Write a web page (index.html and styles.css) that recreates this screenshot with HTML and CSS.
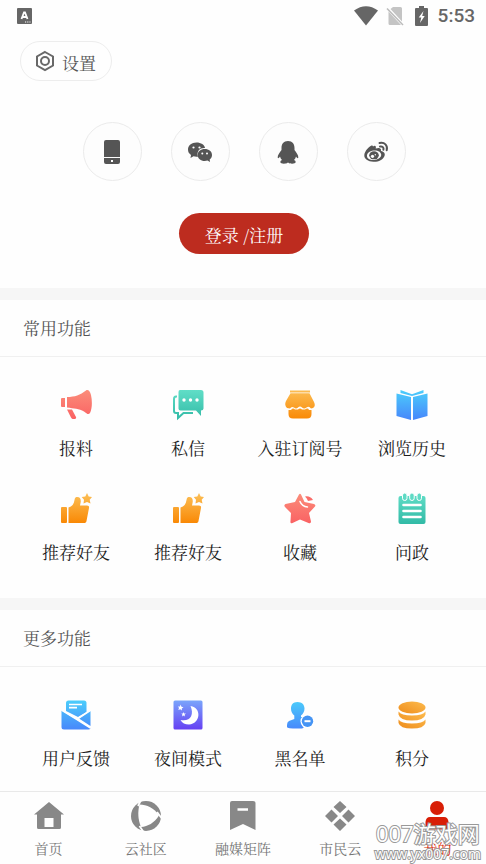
FILE: index.html
```html
<!DOCTYPE html>
<html lang="zh-CN">
<head>
<meta charset="utf-8">
<meta name="viewport" content="width=device-width, initial-scale=1">
<title>我的</title>
<link rel="stylesheet" href="styles.css">
</head>
<body>
<svg class="defs" width="0" height="0" aria-hidden="true">
  <defs>
    <linearGradient id="red" x1="0" y1="0" x2="0" y2="1"><stop offset="0" stop-color="#fb8d7a"/><stop offset="1" stop-color="#fa6263"/></linearGradient>
    <linearGradient id="teal" gradientUnits="userSpaceOnUse" x1="0" y1="0" x2="0" y2="32"><stop offset="0" stop-color="#62dfc8"/><stop offset="1" stop-color="#30b9a5"/></linearGradient>
    <linearGradient id="orange" gradientUnits="userSpaceOnUse" x1="0" y1="0" x2="0" y2="32"><stop offset="0" stop-color="#fcc057"/><stop offset="1" stop-color="#f98500"/></linearGradient>
    <linearGradient id="blue" gradientUnits="userSpaceOnUse" x1="0" y1="0" x2="0" y2="32"><stop offset="0" stop-color="#4bd1fb"/><stop offset="1" stop-color="#4784fb"/></linearGradient>
    <linearGradient id="violet" x1="0" y1="0" x2="0" y2="1"><stop offset="0" stop-color="#7aa5fb"/><stop offset="1" stop-color="#6640f3"/></linearGradient>
    <linearGradient id="coin" x1="1" y1="0" x2="0" y2="1"><stop offset="0" stop-color="#fdbb4e"/><stop offset="1" stop-color="#ee8d1c"/></linearGradient>
    <symbol id="thumb" viewBox="0 0 32 32">
      <g fill="url(#orange)">
        <rect x="1" y="14" width="6" height="16" rx="1"/>
        <path d="M8.500 14.500C12 13.500 14 11 14.500 7C14.800 4.500 16 4 17.300 4C20 4 21 6 20.700 9L20 12.500H27C28.700 12.500 29.300 13.500 29 15L26.500 28C26.200 29.500 25.500 30 24 30H8.500Z"/>
        <path d="M27 0L28.700 3.500L32 4L29.700 6.700L30.500 10.500L27 9L23.500 10.500L24 6.700L21.700 4L25.300 3.500Z"/>
      </g>
    </symbol>
  </defs>
</svg>

<header class="status">
  <svg class="status-app" width="16" height="16" viewBox="0 0 16 16"><rect x="0" y="0" width="15" height="16" rx="1" fill="#666"/><path d="M4.500 11L7 4.500H8L10.500 11M5.500 9H9.500" fill="none" stroke="#fff" stroke-width="1.800"/><path d="M8 14H13.500" stroke="#fff" stroke-width="1" stroke-dasharray="1.200 1"/></svg>
  <svg width="24" height="20" viewBox="0 0 24 20"><path d="M0 4.500Q12-4 24 4.500L12 19.500Z" fill="#666"/></svg>
  <svg class="status-sim" width="18" height="20" viewBox="0 0 18 20"><path d="M4.500 3L7 1H14.500Q16 1 16 2.500V15.500ZM2.500 5.500L15 19H4Q2.500 19 2.500 17.500Z" fill="#c4c4c4"/><path d="M1 2.500L17 19" stroke="#bbb" stroke-width="1.500"/></svg>
  <svg class="status-battery" width="13" height="20" viewBox="0 0 13 20"><path d="M1 2H4V0H9V2H12Q13 2 13 3V19Q13 20 12 20H1Q0 20 0 19V3Q0 2 1 2Z" fill="#666"/><path d="M8.500 5L3.700 11.500H6.300L5 17L9.700 10H7.200Z" fill="#fff"/></svg>
  <time class="clock">5:53</time>
</header>

<main>
  <section class="account">
    <button class="settings" type="button">
      <svg width="20" height="22" viewBox="0 0 20 22" fill="none" stroke="#686868" stroke-width="2"><path d="M10 2L18 6.500V15.500L10 20L2 15.500V6.500Z"/><circle cx="10" cy="11" r="4"/></svg>
      <span>设置</span>
    </button>
    <div class="providers">
      <button type="button" aria-label="手机登录">
        <svg width="26" height="26" viewBox="0 0 26 26"><path d="M5 18V3Q5 1 7 1H19Q21 1 21 3V18ZM5 19H21V23Q21 25 19 25H7Q5 25 5 23Z" fill="#555"/><rect x="12" y="21" width="2" height="2" fill="#fff"/></svg>
      </button>
      <button type="button" aria-label="微信登录">
        <svg width="26" height="26" viewBox="0 0 26 26"><path d="M9.500 3.500C4.500 3.500 1 6.500 1 10.500C1 13 2 14.500 4 16L3.500 19L6.500 17.300Q8.500 18 11 17.700C9 12 13.500 8.500 18 9C17.500 5.800 14 3.500 9.500 3.500Z" fill="#555"/><path d="M17.700 10C13.700 10 10.700 12.500 10.700 16C10.700 19.500 13.700 22 17.700 22L20.500 21.500L23 23L22.700 20.500C24.300 19.300 25 17.800 25 16C25 12.500 22 10 17.700 10Z" fill="#555"/><circle cx="6.500" cy="8.500" r="1.100" fill="#fff"/><circle cx="12.500" cy="8.500" r="1.100" fill="#fff"/><circle cx="15.300" cy="14.500" r="1" fill="#fff"/><circle cx="20" cy="14.500" r="1" fill="#fff"/></svg>
      </button>
      <button type="button" aria-label="QQ登录">
        <svg width="26" height="26" viewBox="0 0 26 26"><path d="M13 2C8.500 2 6.500 5 6.500 9V11C4.500 13.500 2.500 16.500 2.700 18.500C2.900 20 4 19 5 17.500Q5.500 19.500 7 21Q5.300 21.700 5.300 23C5.300 25 11 25.300 13 23.500C15 25.300 20.700 25 20.700 23Q20.700 21.700 19 21Q20.500 19.500 21 17.500C22 19 23.100 20 23.300 18.500C23.500 16.500 21.500 13.500 19.500 11V9C19.500 5 17.500 2 13 2Z" fill="#555"/></svg>
      </button>
      <button type="button" aria-label="微博登录">
        <svg width="26" height="26" viewBox="0 0 26 26"><path fill-rule="evenodd" d="M10 7.500C12 6 13.500 7 12.700 9.500C16 8.500 18.500 8.800 18 12C21 12.800 22.500 14.500 21.500 17C20 21 15.500 23 10.500 22.800C5 22.600 1 20 1.300 16C1.600 12 6.500 7 8.500 6.500Q10 6.200 10 7.500ZM10.500 11.500C6.500 12 3.700 14.500 4 17.200C4.300 20 7.700 21.300 11.500 20.900C15.500 20.500 18.500 18.300 18.200 15.500C17.900 12.700 14.500 11 10.500 11.500Z" fill="#555"/><ellipse cx="11" cy="16.300" rx="4.800" ry="4" fill="#555"/><circle cx="9.500" cy="17.300" r="1.600" fill="#fff"/><circle cx="12.300" cy="15.700" r=".7" fill="#fff"/><path d="M16.500 4C21.500 2.700 25 6.500 23.700 11.200M17 7.500C19.500 7 21 8.700 20.400 10.800" fill="none" stroke="#555" stroke-width="2" stroke-linecap="round"/></svg>
      </button>
    </div>
    <button class="login" type="button">登录 /注册</button>
  </section>

  <section class="panel">
    <h2>常用功能</h2>
    <nav class="features" aria-label="常用功能">
      <a href="#"><svg viewBox="0 0 32 32"><path d="M2 9H5V18H2Q1 18 1 17V10Q1 9 2 9ZM7 8C15 8 20 6 26 1.500C28 .3 30 2 31 6C32.500 13 32 20 30 24C28.500 26 27 25 24 22.500C19 19.500 14 19.500 7 18.500ZM7 20.500H12L16 28Q16.500 29.500 15 30H13Q12 30 11 28.500Z" fill="url(#red)"/></svg><span>报料</span></a>
      <a href="#"><svg viewBox="0 0 32 32"><path d="M8 1H29Q31.500 1 31.500 3.500V19.500Q31.500 21.500 29 21.500V27L24 21.500H8.500Q6.500 21.500 6.500 19.500V3Q6.500 1 8 1Z" fill="url(#teal)"/><path d="M5 7.500H4Q2 7.500 2 10V22Q2 24 4 24H6V29L11.500 24H21" fill="none" stroke="url(#teal)" stroke-width="2"/><g fill="#fff"><circle cx="12" cy="11" r="1.700"/><circle cx="18.500" cy="11" r="1.700"/><circle cx="25" cy="11" r="1.700"/></g></svg><span>私信</span></a>
      <a href="#"><svg viewBox="0 0 32 32"><path d="M6 1.500H26V3.500H6ZM6.500 4.200H25.500L30 13Q32 17 29 19L27 19.500Q25 16.500 22.500 18.500Q20 20.500 18 18.500Q16 16.500 14 18.500Q12 20.500 10 18.500Q7.500 17 6 19.500L3 19Q0 16 2 12ZM4.500 21H7Q9 18.500 11 20.500H14Q16 18.500 18 20.500H21Q24 18.500 25 21H27.500V25Q27.500 29.500 23 29.500H9Q4.500 29.500 4.500 25Z" fill="url(#orange)"/></svg><span>入驻订阅号</span></a>
      <a href="#"><svg viewBox="0 0 32 32"><path d="M.5 4.500L15 8V31L.5 27ZM31.500 4.500L17 8V31L31.500 27ZM4.500 1L16 5.200L27.500 1V4L16 7L4.500 4Z" fill="url(#blue)"/></svg><span>浏览历史</span></a>
      <a href="#"><svg><use href="#thumb"/></svg><span>推荐好友</span></a>
      <a href="#"><svg><use href="#thumb"/></svg><span>推荐好友</span></a>
      <a href="#"><svg viewBox="0 0 32 32"><path d="M15 1.500Q16 0 17 1.500L20.500 9L30 11Q32.500 12 30.500 14L25 20L27 28.500Q27 31 24.500 30L16 26.500L8.500 30Q6 31 6.500 28L7 20L1 14Q-.5 12 1.500 11L11 9Z" fill="url(#red)"/><path d="M21 3.500Q26 2.500 29 7L24 8Q23 5 21 3.500Z" fill="#fa6c68"/><path d="M16 8.500Q18 13.500 23.500 14" fill="none" stroke="#fff" stroke-width="1.500" stroke-linecap="round"/></svg><span>收藏</span></a>
      <a href="#"><svg viewBox="0 0 32 32"><rect x="2.500" y="3" width="27" height="28" rx="2" fill="url(#teal)"/><g fill="#5edac4" stroke="#fff"><rect x="6.500" y="0" width="4.500" height="7.500" rx="2.200"/><rect x="13.700" y="0" width="4.500" height="7.500" rx="2.200"/><rect x="21" y="0" width="4.500" height="7.500" rx="2.200"/></g><path d="M7.500 12H24.500M7.500 18H24.500M7.500 24H24.500" stroke="#fff" stroke-width="2.600" stroke-linecap="round"/></svg><span>问政</span></a>
    </nav>
  </section>

  <section class="panel">
    <h2>更多功能</h2>
    <nav class="features" aria-label="更多功能">
      <a href="#"><svg viewBox="0 0 32 32"><path d="M6 12V4Q6 1.500 8.500 1.500H24Q26.500 1.500 26.500 4V13L18 18Z" fill="url(#blue)"/><path d="M1.500 11.500L30.500 29Q30 30.500 28.500 30.500H4Q1.500 30.500 1.500 28ZM30.500 11.500V27L19 19.500Z" fill="url(#blue)"/><path d="M1.500 11L17 20.700L30.500 29M18 19.500L31 11" fill="none" stroke="#fff" stroke-width="1.500"/><path d="M9 5.500H22M9 8.700H17" stroke="#fff" stroke-width="1.700"/></svg><span>用户反馈</span></a>
      <a href="#"><svg viewBox="0 0 32 32"><rect x="1.500" y="1.500" width="29" height="29" rx="1.500" fill="url(#violet)"/><path d="M18.500 7C30 8.500 28.500 25 17 25.500Q11 25.500 8.500 21C18 23 22.500 16 18.500 7Z" fill="#fff"/><path d="M8.500 5.500L9.500 7.700L11.500 8.300L9.800 9.500L9.900 11.500L8.300 10.300L6.300 11L7 9L6 7.500H8ZM11.500 13L12.200 14.500H14L12.500 15.700L13 17.500L11.500 16.500L10 17.500L10.500 15.700L9.300 14.500H11Z" fill="#fff"/></svg><span>夜间模式</span></a>
      <a href="#"><svg viewBox="0 0 32 32"><path d="M13.500 3C9 3 7 5.800 7 9.500C7 12.500 8.300 15 10.300 16.500V20L5 22Q3 23 3 26V28Q3 29.500 13.500 29.500H18Q21 29 18.500 26Q16 22 19 18L17 18V16.500C19 15 20.500 12.500 20.500 9.500C20.500 5.800 18 3 13.500 3Z" fill="url(#blue)"/><circle cx="23.500" cy="22.200" r="7" fill="#fff"/><circle cx="23.500" cy="22.200" r="5.700" fill="#4594f4"/><path d="M20.500 22.200H26.500" stroke="#fff" stroke-width="2"/></svg><span>黑名单</span></a>
      <a href="#"><svg viewBox="0 0 32 32"><g fill="url(#coin)"><ellipse cx="16" cy="8.500" rx="13.500" ry="6"/><path d="M2.500 12.500Q5 16.500 16 16.500T29.500 12.500V15.500Q28 21.500 16 21.500T2.500 15.500ZM2.500 20.500Q5 24.500 16 24.500T29.500 20.500V24Q28 29.500 16 29.500T2.500 24Z"/></g></svg><span>积分</span></a>
    </nav>
  </section>
</main>

<nav class="tabs" aria-label="主导航">
  <a href="#"><svg viewBox="0 0 32 32"><path fill-rule="evenodd" d="M16 2L31 14.500H28V27.500Q28 29 26.500 29H5.500Q4 29 4 27.500V14.500H1ZM11.500 18V27H20.500V18Z"/></svg><span>首页</span></a>
  <a href="#"><svg viewBox="0 0 32 32"><circle cx="16" cy="16" r="15"/><path d="M9.500 4.500C17 4.500 24 8 29 15.500C24 23 18 26.500 11 27C8 20 7.500 12 9.500 4.500Z" fill="#fff"/><path d="M11 0L8 6M27 12L31.500 18M13.500 32L9.500 26" stroke="#fff" stroke-width="1.800"/></svg><span>云社区</span></a>
  <a href="#"><svg viewBox="0 0 32 32"><path d="M5 1H26Q28.500 1 28.500 3V30L16 24L3 30V3Q3 1 5 1Z"/><path d="M10.500 9.500H21" stroke="#fff" stroke-width="2.500"/></svg><span>融媒矩阵</span></a>
  <a href="#"><svg viewBox="0 0 32 32"><path d="M16 1L22.500 7L16 13L9.500 7ZM7.500 9.500L14 16L7.500 22.500L1 16ZM24.500 9.500L31 16L24.500 22.500L18 16ZM16 18.500L22.500 24.500L16 31L9.500 24.500Z"/></svg><span>市民云</span></a>
  <a href="#" class="active" aria-current="page"><svg viewBox="0 0 32 32"><circle cx="16" cy="8" r="7"/><path d="M9 17H23Q27 17 27.500 22V27Q27.500 29.500 25 29.500H7Q4.500 29.500 4.500 27V22Q5 17 9 17Z"/></svg><span>我的</span></a>
  <p class="watermark"><strong>007游戏网</strong><span>www.yx007.com</span></p>
</nav>
</body>
</html>
```

FILE: styles.css
```css
* { box-sizing: border-box; }

body {
  margin: 0;
  min-height: 100vh;
  display: flex;
  flex-direction: column;
  background: #fefefe;
  color: #1c1c1c;
  font-family: "Noto Serif CJK SC", "Noto Sans CJK SC", serif;
}

main { flex: 1; }
svg { display: block; flex: none; }
a { color: inherit; text-decoration: none; }
button { font: inherit; cursor: pointer; }
.defs { position: absolute; }

.status {
  display: flex;
  align-items: center;
  height: 32px;
  padding: 0 11px 0 17px;
}
.status-app { margin-right: auto; }
.status-sim { margin-left: 8px; }
.status-battery { margin: 0 10px 0 11px; }
.clock {
  color: #666;
  font: 500 19px/32px Roboto, sans-serif;
}

.account {
  display: flex;
  flex-direction: column;
  align-items: center;
  padding: 9px 18px 34px 20px;
}
.settings {
  align-self: flex-start;
  display: flex;
  align-items: center;
  gap: 7px;
  height: 40px;
  padding: 0 15px 0 14px;
  border: 1px solid #ededed;
  border-radius: 20px;
  background: #fefefe;
  color: #555;
  font-size: 17px;
}
.settings span { padding-top: 3px; }
.providers {
  display: flex;
  gap: 29px;
  margin: 41px 0 32px;
}
.providers button {
  display: grid;
  place-items: center;
  width: 59px;
  height: 59px;
  padding: 0;
  border: 1px solid #ebebeb;
  border-radius: 50%;
  background: #fdfdfd;
}
.login {
  height: 41px;
  padding: 2px 26px 0;
  border: 0;
  border-radius: 21px;
  background: #bd2c1f;
  color: #fff;
  font-size: 17px;
}

.panel { border-top: 12px solid #f6f6f6; }
.panel h2 {
  margin: 0;
  padding: 0 23px;
  border-bottom: 1px solid #f0f0f0;
  color: #555;
  font-size: 17px;
  font-weight: 400;
  line-height: 56px;
}
.features {
  display: grid;
  grid-template-columns: repeat(4, 1fr);
  row-gap: 33px;
  padding: 32px 18px 34px 20px;
}
.panel:last-child .features { padding-bottom: 20px; }
.features a {
  display: flex;
  flex-direction: column;
  align-items: center;
  gap: 15px;
  font-size: 17px;
  line-height: 24px;
  white-space: nowrap;
}
.features svg { width: 32px; height: 32px; }

.tabs {
  position: sticky;
  bottom: 0;
  display: grid;
  grid-template-columns: repeat(5, 1fr);
  height: 73px;
  border-top: 1px solid #e9e9e9;
  background: #fefefe;
}
.tabs a {
  display: flex;
  flex-direction: column;
  align-items: center;
  gap: 6px;
  padding-top: 8px;
  color: #777;
  fill: #888;
  font-size: 14px;
  line-height: 20px;
}
.tabs svg { width: 32px; height: 32px; }
.tabs .active { color: #d81e06; fill: #d81e06; }

.watermark {
  position: absolute;
  right: 5px;
  bottom: 2px;
  display: flex;
  flex-direction: column;
  align-items: center;
  margin: 0;
  color: #fff;
  font-family: "Open Sans", "Noto Sans CJK SC", sans-serif;
  -webkit-text-stroke: 2px #999;
  paint-order: stroke fill;
  pointer-events: none;
}
.watermark strong { font-size: 22px; font-weight: 400; line-height: 24px; }
.watermark span { font-size: 14px; line-height: 17px; }
```
